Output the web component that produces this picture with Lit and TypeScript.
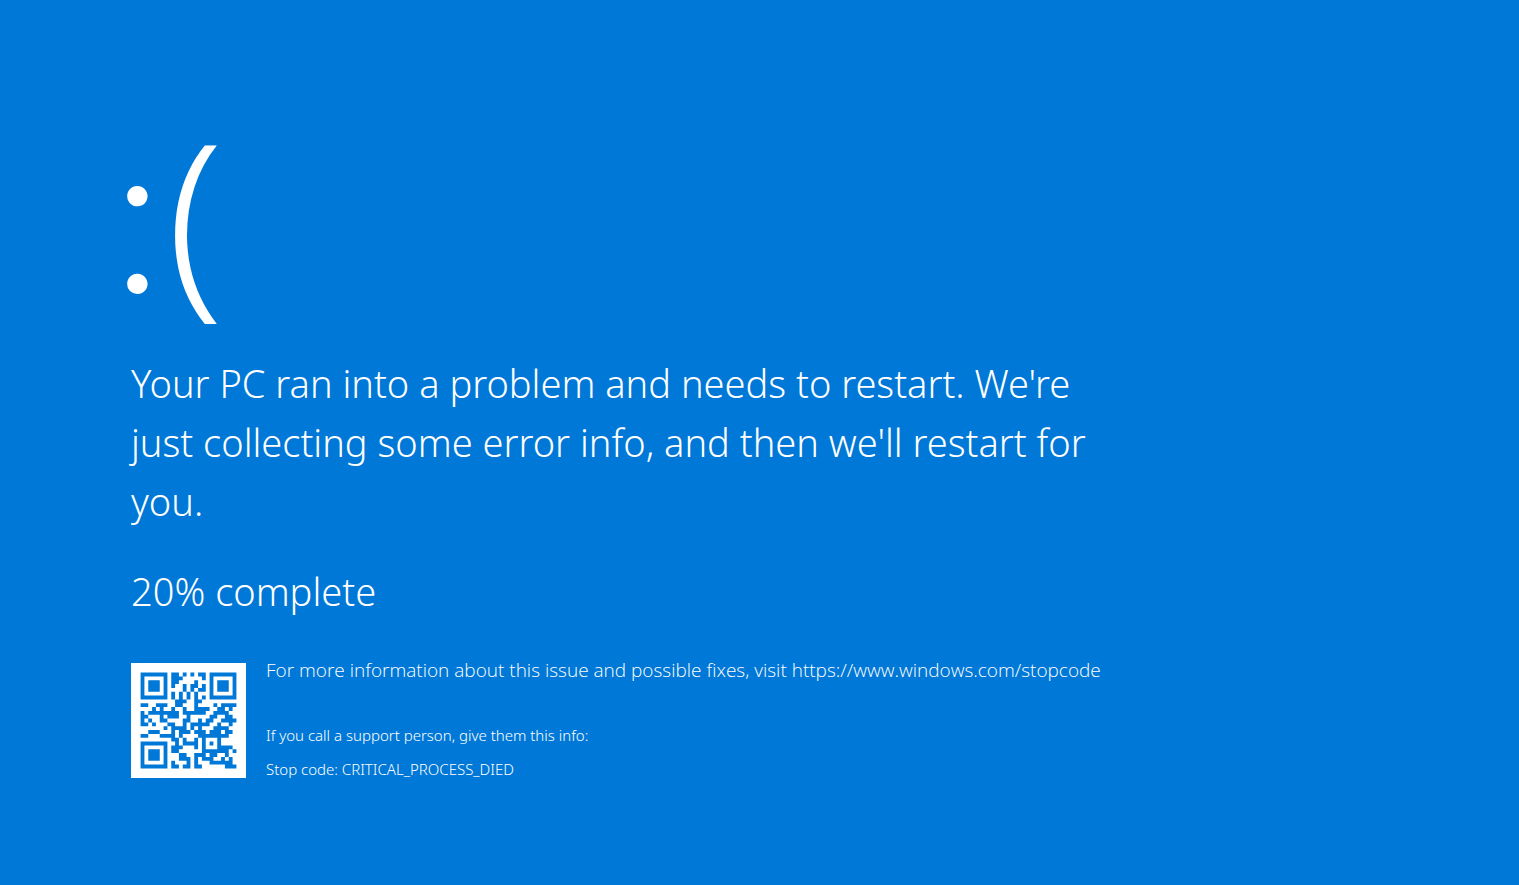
import { LitElement, html, css, svg } from "lit";
import { customElement, property } from "lit/decorators.js";

const SIZE = 25;
const DATA_WORDS = 34;
const EC_WORDS = 10;
// Format bits for error level L with mask 4.
const FORMAT = "110011000101111";

function gfMul(a: number, b: number): number {
  let r = 0;
  for (let i = 7; i >= 0; i--) {
    r = (r << 1) ^ ((r >>> 7) * 0x11d);
    r ^= ((b >>> i) & 1) * a;
  }
  return r;
}

function errorWords(data: number[]): number[] {
  const gen: number[] = new Array(EC_WORDS).fill(0);
  gen[EC_WORDS - 1] = 1;
  let root = 1;
  for (let i = 0; i < EC_WORDS; i++) {
    for (let j = 0; j < EC_WORDS; j++) {
      gen[j] = gfMul(gen[j], root);
      if (j + 1 < EC_WORDS) gen[j] ^= gen[j + 1];
    }
    root = gfMul(root, 2);
  }
  const rem: number[] = new Array(EC_WORDS).fill(0);
  for (const d of data) {
    const f = d ^ rem.shift()!;
    rem.push(0);
    gen.forEach((g, i) => (rem[i] ^= gfMul(g, f)));
  }
  return rem;
}

// Version 2 QR symbol in byte mode; holds up to 32 characters.
function qrMatrix(text: string): boolean[][] {
  const m: (boolean | null)[][] = Array.from({ length: SIZE }, () => new Array(SIZE).fill(null));

  const finder = (top: number, left: number) => {
    for (let r = -1; r <= 7; r++)
      for (let c = -1; c <= 7; c++) {
        const y = top + r;
        const x = left + c;
        if (y < 0 || x < 0 || y >= SIZE || x >= SIZE) continue;
        const d = Math.max(Math.abs(r - 3), Math.abs(c - 3));
        m[y][x] = d !== 2 && d !== 4;
      }
  };
  finder(0, 0);
  finder(0, SIZE - 7);
  finder(SIZE - 7, 0);

  for (let r = -2; r <= 2; r++)
    for (let c = -2; c <= 2; c++) m[18 + r][18 + c] = Math.max(Math.abs(r), Math.abs(c)) !== 1;

  for (let i = 8; i < SIZE - 8; i++) {
    m[6][i] = i % 2 === 0;
    m[i][6] = i % 2 === 0;
  }

  const f = [...FORMAT].map((b) => b === "1");
  const first = [[8, 0], [8, 1], [8, 2], [8, 3], [8, 4], [8, 5], [8, 7], [8, 8], [7, 8], [5, 8], [4, 8], [3, 8], [2, 8], [1, 8], [0, 8]];
  first.forEach(([r, c], i) => (m[r][c] = f[i]));
  for (let i = 0; i < 7; i++) m[SIZE - 1 - i][8] = f[i];
  for (let i = 7; i < 15; i++) m[8][SIZE - 15 + i] = f[i];
  m[SIZE - 8][8] = true;

  let bits = "0100" + text.length.toString(2).padStart(8, "0");
  for (const ch of text) bits += ch.charCodeAt(0).toString(2).padStart(8, "0");
  bits += "0000";
  const data: number[] = [];
  for (let i = 0; i < bits.length; i += 8) data.push(parseInt(bits.slice(i, i + 8), 2));
  for (let pad = 0xec; data.length < DATA_WORDS; pad ^= 0xec ^ 0x11) data.push(pad);
  const stream = [...data, ...errorWords(data)].map((w) => w.toString(2).padStart(8, "0")).join("");

  let k = 0;
  let up = true;
  for (let right = SIZE - 1; right >= 1; right -= 2) {
    if (right === 6) right = 5;
    for (let v = 0; v < SIZE; v++) {
      const y = up ? SIZE - 1 - v : v;
      for (const x of [right, right - 1]) {
        if (m[y][x] !== null) continue;
        const invert = (Math.floor(y / 2) + Math.floor(x / 3)) % 2 === 0;
        m[y][x] = (stream[k++] === "1") !== invert;
      }
    }
    up = !up;
  }
  return m as boolean[][];
}

@customElement("qr-code")
export class QrCode extends LitElement {
  @property() value = "";

  static styles = css`
    :host {
      display: block;
    }
    .code {
      display: block;
      width: 100%;
      background: #fff;
      fill: #0078d7;
    }
  `;

  render() {
    let d = "";
    qrMatrix(this.value).forEach((row, y) => {
      for (let x = 0; x < SIZE; x++) {
        if (!row[x]) continue;
        const start = x;
        while (x + 1 < SIZE && row[x + 1]) x++;
        d += `M${start} ${y}h${x + 1 - start}v1h${start - x - 1}z`;
      }
    });
    return html`<svg class="code" viewBox="-2.5 -2.5 30 30" role="img" aria-label="QR code">
      ${svg`<path d=${d}></path>`}
    </svg>`;
  }
}

@customElement("app-root")
export class AppRoot extends LitElement {
  @property({ type: Number }) progress = 20;
  @property() stopCode = "CRITICAL_PROCESS_DIED";

  static styles = css`
    :host {
      display: block;
      box-sizing: border-box;
      min-height: 100vh;
      padding: 78px 0 78px 131px;
      background: #0078d7;
      color: #fff;
      font-family: "Noto Sans", "Open Sans", sans-serif;
      font-weight: 300;
    }
    .screen {
      width: 71%;
    }
    p,
    h1 {
      margin: 0;
      font-weight: 300;
    }
    .face {
      display: flex;
      align-items: baseline;
      gap: 3px;
      height: 276px;
      margin-left: -20px;
      line-height: 258px;
    }
    .eyes {
      font-family: Lato, sans-serif;
      font-size: 220px;
    }
    .mouth {
      font-size: 204px;
    }
    .message,
    .progress {
      font-size: 38px;
      line-height: 59px;
    }
    .progress {
      margin-top: 31px;
    }
    .details {
      display: flex;
      gap: 20px;
      margin-top: 42px;
    }
    .qr {
      flex: none;
      width: 115px;
    }
    .info {
      font-family: "Open Sans", "Noto Sans", sans-serif;
      font-size: 19px;
      line-height: 14px;
    }
    .support {
      margin-top: 41px;
      font-size: 15px;
      line-height: 34px;
    }
  `;

  render() {
    return html`
      <main class="screen">
        <p class="face"><span class="eyes">:</span><span class="mouth">(</span></p>
        <h1 class="message">
          Your PC ran into a problem and needs to restart. We're just collecting some error info, and then we'll restart
          for you.
        </h1>
        <p class="progress">${this.progress}% complete</p>
        <section class="details">
          <qr-code class="qr" value="https://www.windows.com/stopcode"></qr-code>
          <div>
            <p class="info">
              For more information about this issue and possible fixes, visit https://www.windows.com/stopcode
            </p>
            <div class="support">
              <p>If you call a support person, give them this info:</p>
              <p>Stop code: ${this.stopCode}</p>
            </div>
          </div>
        </section>
      </main>
    `;
  }
}
